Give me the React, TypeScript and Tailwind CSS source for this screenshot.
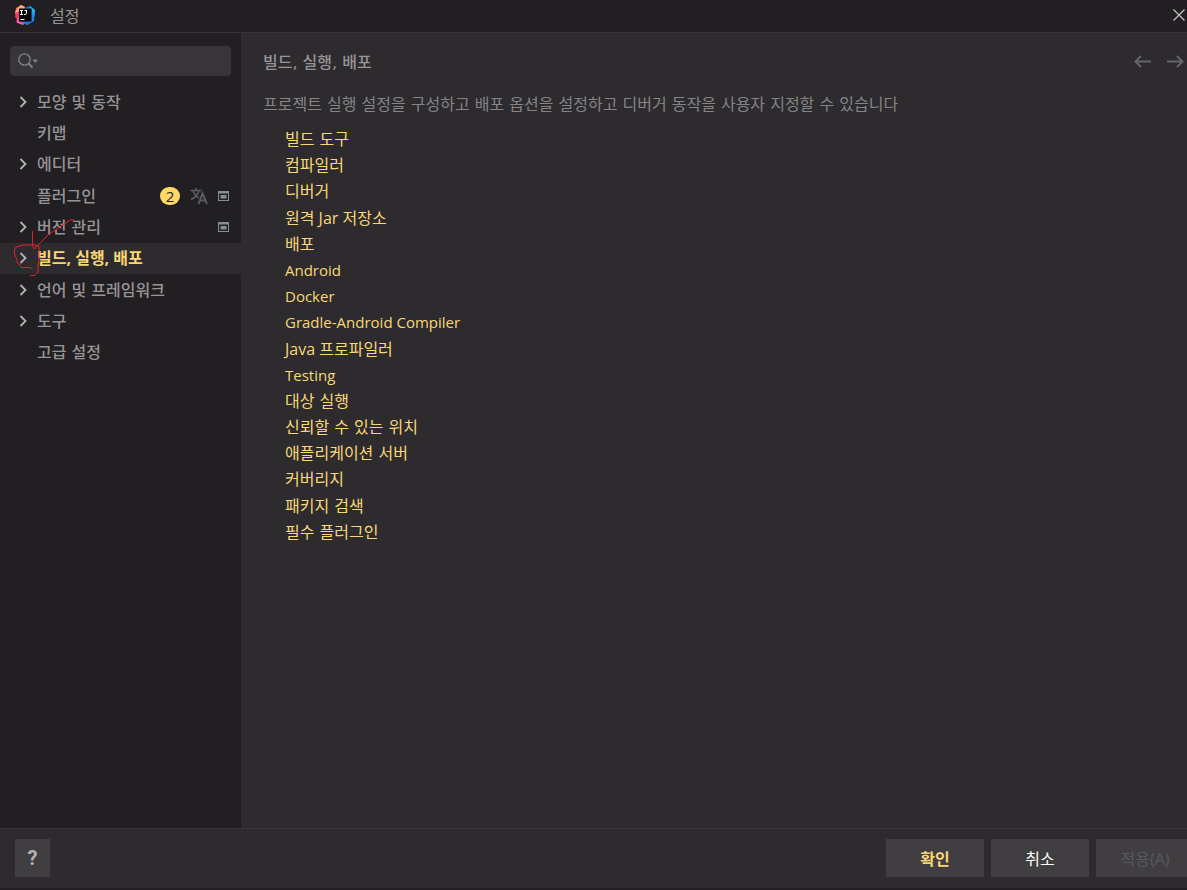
import React from "react";

type NavItem = {
  label: string;
  expandable?: boolean;
  badge?: string;
  translated?: boolean;
  projectLevel?: boolean;
  selected?: boolean;
};

const NAV_ITEMS: NavItem[] = [
  { label: "모양 및 동작", expandable: true },
  { label: "키맵" },
  { label: "에디터", expandable: true },
  { label: "플러그인", badge: "2", translated: true, projectLevel: true },
  { label: "버전 관리", expandable: true, projectLevel: true },
  { label: "빌드, 실행, 배포", expandable: true, selected: true },
  { label: "언어 및 프레임워크", expandable: true },
  { label: "도구", expandable: true },
  { label: "고급 설정" },
];

type Script = "hangul" | "latin" | "mixed";

const LINKS: { label: string; script: Script }[] = [
  { label: "빌드 도구", script: "hangul" },
  { label: "컴파일러", script: "hangul" },
  { label: "디버거", script: "hangul" },
  { label: "원격 Jar 저장소", script: "mixed" },
  { label: "배포", script: "hangul" },
  { label: "Android", script: "latin" },
  { label: "Docker", script: "latin" },
  { label: "Gradle-Android Compiler", script: "latin" },
  { label: "Java 프로파일러", script: "mixed" },
  { label: "Testing", script: "latin" },
  { label: "대상 실행", script: "hangul" },
  { label: "신뢰할 수 있는 위치", script: "hangul" },
  { label: "애플리케이션 서버", script: "hangul" },
  { label: "커버리지", script: "hangul" },
  { label: "패키지 검색", script: "hangul" },
  { label: "필수 플러그인", script: "hangul" },
];

const LINK_FONT: Record<Script, string> = {
  hangul: "",
  latin: "font-['Open_Sans',sans-serif] text-[15px] leading-[22px]",
  mixed: "font-['Open_Sans','Noto_Sans_CJK_KR',sans-serif] leading-[22px]",
};

function AppLogo() {
  return (
    <svg width="20" height="20" viewBox="0 0 20 20" aria-hidden="true">
      <path d="M1 3 6 0l5 3-3 9-6 1-2-5z" fill="#f0714e" />
      <path d="M6 0 10 2 5 7 0 8 3 3z" fill="#fbb08c" />
      <path d="M1 8 5 5v11l-4 1 1-3-2-2z" fill="#f5386f" />
      <path d="M2 13 5 14l6 3-3 3-6-2z" fill="#ee5fa0" />
      <path d="M10 3 15 1l5 4-1 11-7 4-6-3z" fill="#1787ee" />
      <path d="m15 1 5 4-1 7-3-8z" fill="#28aef2" />
      <path d="m7 17 9-1 3 0-7 4z" fill="#2b6fd0" />
      <rect x="4" y="3.500" width="12.500" height="13" fill="#080406" />
      <path
        d="M5 5.500h3M6.500 5.500v4M5 9.500h3M9.500 5.500h2.500M11.500 5v3.200q0 1.300-1.200 1.300H9M5.500 14.500h4"
        fill="none"
        stroke="#fff"
        strokeWidth="1"
      />
    </svg>
  );
}

function CloseIcon() {
  return (
    <svg width="12" height="12" viewBox="0 0 12 12" aria-hidden="true">
      <path d="m.5.5 11 11m0-11-11 11" stroke="#c4c3c4" strokeWidth="1.200" />
    </svg>
  );
}

function SearchIcon() {
  return (
    <svg className="shrink-0" width="21" height="16" viewBox="0 0 21 16" fill="none" aria-hidden="true">
      <circle cx="6.500" cy="6.500" r="5.700" stroke="#7c858b" strokeWidth="1.300" />
      <path d="m10.500 10.500 4 4" stroke="#7c858b" strokeWidth="1.800" />
      <path d="M14.500 6.500h5.500l-2.750 3.500z" fill="#7c858b" />
    </svg>
  );
}

function ChevronIcon() {
  return (
    <svg width="8" height="12" viewBox="0 0 8 12" fill="none" aria-hidden="true">
      <path d="m1.500 1 5 5-5 5" stroke="#b5b4b5" strokeWidth="1.800" />
    </svg>
  );
}

function TranslateIcon() {
  return (
    <svg width="18" height="18" viewBox="0 0 18 18" fill="none" aria-hidden="true">
      <path
        d="M.5 3.500h11M6 1v2.500M3 3.500q1.500 5 6 7.500M9 3.500Q7.500 9.500 1 12.500"
        stroke="#5b5b5e"
        strokeWidth="1.700"
      />
      <path d="m8.500 17 4-10.500L17 17M10 13.500h5.500" stroke="#5b5b5e" strokeWidth="2" />
    </svg>
  );
}

function ProjectIcon() {
  return (
    <svg width="11" height="10" viewBox="0 0 11 10" fill="none" aria-hidden="true">
      <path d="M0 0h11v10H0zM1 2.500v6.500h9V2.500z" fill="#858d92" fillRule="evenodd" />
      <rect x="2.500" y="4" width="6" height="3.500" fill="#858d92" />
    </svg>
  );
}

function ArrowIcon({ forward = false }: { forward?: boolean }) {
  return (
    <svg width="17" height="13" viewBox="0 0 17 13" fill="none" aria-hidden="true">
      <path
        d={forward ? "M0 6.500h15.500M10 1l5.500 5.500L10 12" : "M17 6.500H1.500M7 1 1.500 6.500 7 12"}
        stroke="#67666a"
        strokeWidth="1.900"
      />
    </svg>
  );
}

function PenMark() {
  return (
    <svg
      className="pointer-events-none absolute left-[13px] -top-[25px]"
      width="64"
      height="60"
      viewBox="0 0 64 60"
      fill="none"
      stroke="#e0232b"
      aria-hidden="true"
    >
      <path d="M19.500 13v14.500l2 3.500 6-6.500L36 16l7-4.500 9-6L57 2h4" />
      <path d="M26 28.500 22 27H10l-7 2-1.500 3v5l2.500 4v3.500l3 2.500 1.500 2.500h9l2 1.500M26 28.500v14.500l-1 4v7l-3 3.500h-5" />
    </svg>
  );
}

function NavRow({ item }: { item: NavItem }) {
  return (
    <li className={item.selected ? "relative bg-[#2d2b2e]" : ""}>
      <button
        type="button"
        className={
          item.selected
            ? "flex h-full w-full items-center pr-3 pl-[19px] text-left font-['Open_Sans','Noto_Sans_CJK_KR',sans-serif] font-bold text-[#f8d777]"
            : "flex h-full w-full items-center pr-3 pl-[19px] text-left font-medium text-[#969496]"
        }
      >
        <span className="w-[18px] shrink-0">{item.expandable && <ChevronIcon />}</span>
        <span className={item.selected ? "grow" : "grow pt-[2px]"}>{item.label}</span>
        <span className="flex items-center gap-[10px]">
          {item.badge && (
            <span className="flex h-[18px] w-5 items-center justify-center rounded-full bg-[#ffd866] font-['Open_Sans',sans-serif] text-[15px] font-normal text-[#221f22]">
              {item.badge}
            </span>
          )}
          {item.translated && <TranslateIcon />}
          {item.projectLevel && <ProjectIcon />}
        </span>
      </button>
      {item.selected && <PenMark />}
    </li>
  );
}

export default function App() {
  return (
    <div className="flex min-h-screen flex-col overflow-hidden border-b-2 border-[#221f22] bg-[#2d2b2e] font-['DejaVu_Sans','Noto_Sans_CJK_KR',sans-serif] text-base leading-6 text-[#969496]">
      <header className="flex h-[33px] items-center border-b border-[#363438] bg-[#221f22] pb-[2px] pl-[15px]">
        <AppLogo />
        <h1 className="grow pt-[3px] pl-[15px]">설정</h1>
        <button type="button" aria-label="닫기" className="pr-0.5">
          <CloseIcon />
        </button>
      </header>

      <div className="flex grow">
        <aside className="w-[241px] shrink-0 bg-[#221f22] pt-[13px]">
          <label className="mx-[10px] flex h-[30px] items-center rounded-sm bg-[#373538] pl-2">
            <SearchIcon />
            <input
              type="search"
              aria-label="설정 검색"
              className="w-full min-w-0 bg-transparent px-1 outline-none"
            />
          </label>
          <nav className="pt-[10px]">
            <ul className="grid h-[282px] auto-rows-fr">
              {NAV_ITEMS.map((item) => (
                <NavRow key={item.label} item={item} />
              ))}
            </ul>
          </nav>
        </aside>

        <main className="grow pt-4 pl-[22px]">
          <div className="flex items-start justify-between">
            <h2 className="pt-[2px] font-medium">빌드, 실행, 배포</h2>
            <div className="flex h-6 items-center gap-4 pr-[3px]">
              <button type="button" aria-label="뒤로">
                <ArrowIcon />
              </button>
              <button type="button" aria-label="앞으로">
                <ArrowIcon forward />
              </button>
            </div>
          </div>
          <p className="pt-[18px] text-[#868487]">
            프로젝트 실행 설정을 구성하고 배포 옵션을 설정하고 디버거 동작을 사용자 지정할 수 있습니다
          </p>
          <ul className="mt-[11px] grid h-[419px] auto-rows-fr pl-[22px] text-[#f8d777]">
            {LINKS.map(({ label, script }) => (
              <li key={label} className={LINK_FONT[script]}>
                <a href="#">{label}</a>
              </li>
            ))}
          </ul>
        </main>
      </div>

      <footer className="flex h-[60px] items-start gap-[7px] border-t border-[#363438] pt-[10px] pl-[15px]">
        <button
          type="button"
          aria-label="도움말"
          className="h-[38px] w-[35px] bg-[#403e41] font-['Roboto',sans-serif] text-xl font-bold text-[#b5b4b5]"
        >
          ?
        </button>
        <span className="grow" />
        <button type="button" className="h-[38px] w-[98px] bg-[#403e41] pt-1 font-bold text-[#f8d777]">
          확인
        </button>
        <button type="button" className="h-[38px] w-[98px] bg-[#403e41] pt-1 text-[#fcfcfa]">
          취소
        </button>
        <button
          type="button"
          disabled
          className="-mr-[7px] h-[38px] w-[98px] bg-[#403e41] pt-[2px] font-['Open_Sans','Noto_Sans_CJK_KR',sans-serif] text-[#5b595c]"
        >
          적용(A)
        </button>
      </footer>
    </div>
  );
}
